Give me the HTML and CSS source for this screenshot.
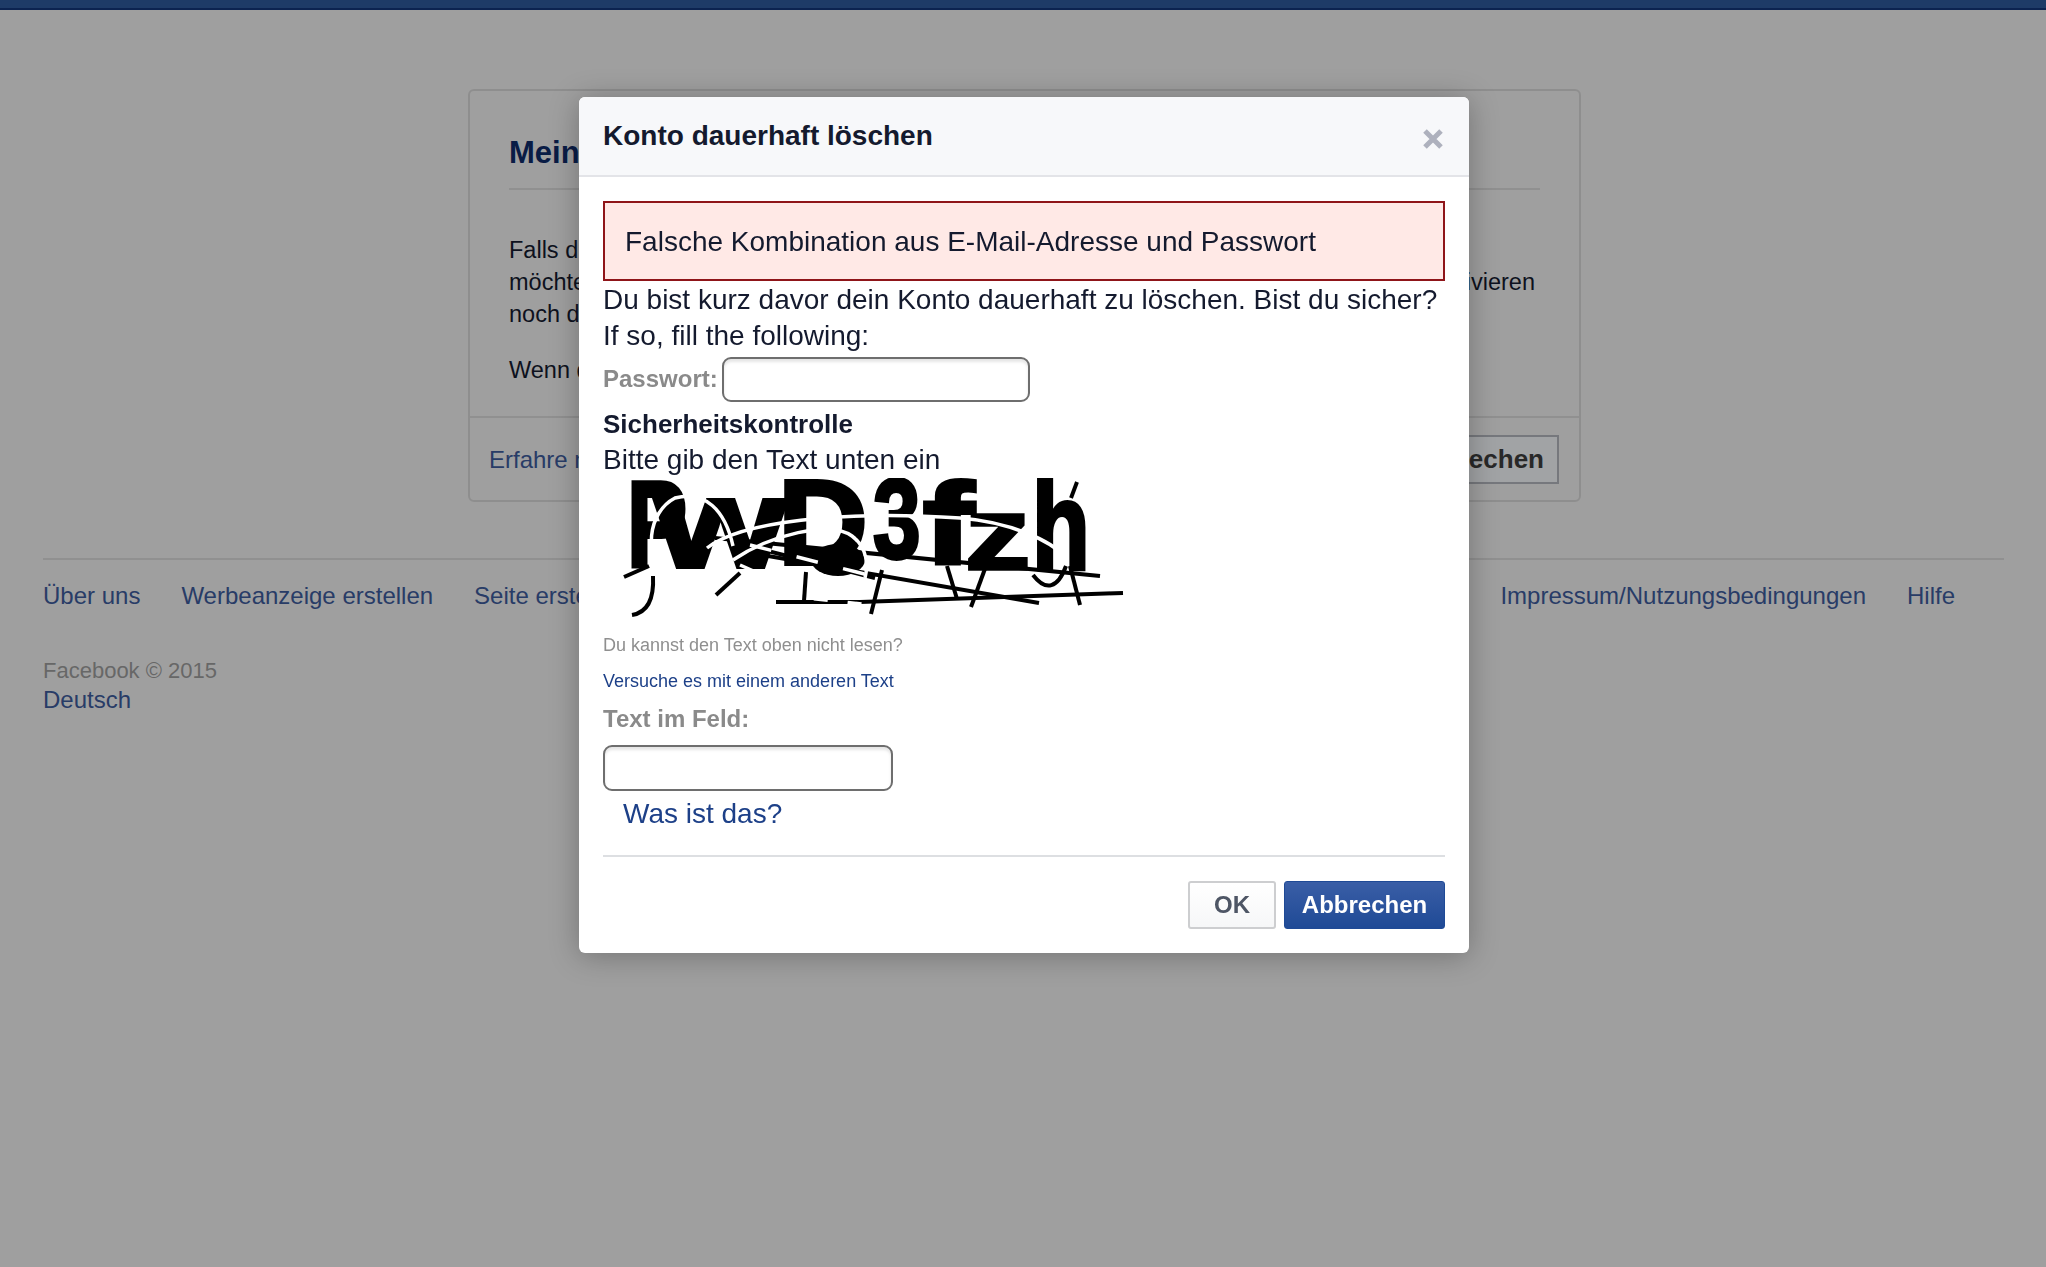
FILE: index.html
```html
<!DOCTYPE html>
<html lang="de">
<head>
<meta charset="utf-8">
<title>Konto dauerhaft löschen</title>
<link rel="stylesheet" href="styles.css">
</head>
<body>
<div class="topbar"></div>
<main class="card">
  <div class="card-main">
    <h1 class="card-title">Mein Konto löschen</h1>
    <p class="card-text">Falls du glaubst, dass du Facebook nicht mehr nutzen wirst und dein Konto löschen
      <span class="card-line">möchtest, kümmern wir uns darum. Beachte, dass du dein Konto nicht reaktivieren</span>
      noch deine Inhalte wiederherstellen kannst.</p>
    <p class="card-text card-text-last">Wenn du dein Konto trotzdem löschen möchtest, klicke auf „Konto löschen“.</p>
  </div>
  <div class="card-foot">
    <a class="link card-link" href="#">Erfahre mehr</a>
    <button class="card-btn" type="button">Mein Konto löschen – Abbrechen</button>
  </div>
</main>
<footer class="foot">
  <nav class="foot-nav">
    <div class="foot-group">
      <a class="link" href="#">Über uns</a>
      <a class="link" href="#">Werbeanzeige erstellen</a>
      <a class="link" href="#">Seite erstellen</a>
      <a class="link" href="#">Entwickler</a>
      <a class="link" href="#">Karriere</a>
      <a class="link" href="#">Datenschutz</a>
      <a class="link" href="#">Cookies</a>
    </div>
    <div class="foot-group foot-group-end">
      <a class="link" href="#">Impressum/Nutzungsbedingungen</a>
      <a class="link" href="#">Hilfe</a>
    </div>
  </nav>
  <div class="copy">Facebook © 2015</div>
  <a class="link lang" href="#">Deutsch</a>
</footer>

<div class="overlay"></div>

<section class="modal">
  <header class="modal-head">
    <h2 class="modal-title">Konto dauerhaft löschen</h2>
    <svg class="close" viewBox="0 0 20 20" aria-label="Schließen"><path d="M2 2 18 18M18 2 2 18"/></svg>
  </header>
  <div class="modal-body">
    <div class="error">Falsche Kombination aus E-Mail-Adresse und Passwort</div>
    <p class="line">Du bist kurz davor dein Konto dauerhaft zu löschen. Bist du sicher?</p>
    <p class="line">If so, fill the following:</p>
    <div class="pw-row">
      <label class="label" for="pw">Passwort:</label>
      <input class="field field-pw" id="pw" type="password">
    </div>
    <h3 class="sec-title">Sicherheitskontrolle</h3>
    <p class="line line-tight">Bitte gib den Text unten ein</p>
    <svg class="captcha" viewBox="23 18 523 150" aria-hidden="true">
      <g class="cap-letters">
        <text transform="translate(47 107) scale(1 1.37)">P</text>
        <text transform="translate(76 107) scale(1.85 1.4)">w</text>
        <text transform="translate(198 104) scale(1.38 1.33)">D</text>
        <text transform="translate(293 98) scale(.95 1.25)">3</text>
        <text transform="translate(343 104) scale(1.7 1.28)">f</text>
        <text transform="translate(385 109) scale(1.45 1.13)">z</text>
        <text transform="translate(452 109) scale(1.05 1.38)">h</text>
      </g>
      <ellipse class="cap-blob" cx="258" cy="100" rx="27" ry="16"/>
      <g class="cap-noise">
        <path d="M44 117 69 106"/>
        <path d="M73 116C74 135 70 152 52 155"/>
        <path d="M136 135 160 113"/>
        <path d="M226 112 224 141"/>
        <path d="M196 142 280 142 543 133"/>
        <path d="M302 110 291 154"/>
        <path d="M367 106 377 139"/>
        <path d="M406 106 391 147"/>
        <path d="M490 106 500 145"/>
        <path d="M453 115C466 132 478 128 486 106"/>
        <path d="M497 22 491 38"/>
        <path d="M165 92 459 143"/>
        <path d="M135 78 520 116"/>
        <path d="M160 84 295 118"/>
      </g>
      <g class="cap-white">
        <path d="M88 124C62 95 68 52 95 38 125 30 145 50 153 86"/>
        <path d="M127 88C160 62 260 50 380 58 430 62 470 80 487 98"/>
        <path d="M153 100C190 75 250 60 272 76 288 88 288 106 285 118"/>
        <path d="M160 105 205 125" stroke-dasharray="16 5"/>
        <path d="M170 85 300 118" stroke-dasharray="22 26"/>
        <path d="M200 135 290 145" stroke-dasharray="14 20"/>
      </g>
    </svg>
    <p class="hint">Du kannst den Text oben nicht lesen?</p>
    <a class="alt-link" href="#">Versuche es mit einem anderen Text</a>
    <label class="label label-block" for="cap">Text im Feld:</label>
    <input class="field field-cap" id="cap" type="text">
    <a class="what" href="#">Was ist das?</a>
    <hr class="rule">
    <div class="actions">
      <button class="btn btn-ok" type="button">OK</button>
      <button class="btn btn-cancel" type="button">Abbrechen</button>
    </div>
  </div>
</section>
</body>
</html>
```

FILE: styles.css
```css
* { box-sizing: border-box; }
html, body { height: 100%; }
body {
  margin: 0;
  background: #ebebeb;
  color: #141a2e;
  font-family: "Liberation Sans", Arial, sans-serif;
  overflow: hidden;
}
a { text-decoration: none; }
p, h1, h2, h3 { margin: 0; }

.topbar {
  height: 10px;
  background: #2d5899;
  border-bottom: 2px solid #133477;
}

.card {
  width: 1113px;
  height: 413px;
  margin: 79px 0 0 468px;
  background: #ebebeb;
  border: 2px solid #d2d2d2;
  border-radius: 6px;
  display: flex;
  flex-direction: column;
}
.card-main { flex: 1; padding: 0 39px; }
.card-title {
  height: 99px;
  padding-top: 43px;
  border-bottom: 2px solid #d4d4d4;
  font-size: 31px;
  line-height: 38px;
  color: #0e2a66;
  white-space: nowrap;
}
.card-text { margin-top: 44px; font-size: 23.5px; line-height: 32px; white-space: nowrap; }
.card-line { display: block; width: 1026px; text-align-last: justify; }
.card-text-last { margin-top: 24px; }
.card-foot {
  height: 84px;
  flex: none;
  border-top: 2px solid #d4d4d4;
  padding: 0 20px 0 19px;
  display: flex;
  align-items: center;
  justify-content: space-between;
  font-size: 24px;
}
.card-link { margin-top: 2px; }
.card-btn {
  height: 49px;
  padding: 0 13px;
  background: #eef0f3;
  border: 2px solid #aeb1b8;
  font: bold 26px "Liberation Sans", Arial, sans-serif;
  color: #3c3c3c;
  white-space: nowrap;
}

.link { color: #3b5998; }

.foot { margin: 56px 42px 0 43px; border-top: 2px solid #d4d4d4; }
.foot-nav {
  display: flex;
  justify-content: space-between;
  padding-top: 19px;
  font-size: 24px;
  line-height: 34px;
}
.foot-group { display: flex; gap: 41px; white-space: nowrap; }
.foot-group-end { margin-right: 49px; }
.copy { margin-top: 43px; font-size: 22px; line-height: 30px; color: #999; }
.lang { display: block; font-size: 24px; line-height: 28px; }

.overlay {
  position: fixed;
  inset: 0;
  background: rgba(0, 0, 0, .32);
}

.modal {
  position: absolute;
  left: 579px;
  top: 97px;
  width: 890px;
  height: 856px;
  background: #fff;
  border-radius: 6px;
  box-shadow: 0 3px 30px rgba(0, 0, 0, .28);
}
.modal-head {
  height: 80px;
  padding: 0 26px 0 24px;
  background: #f7f8fa;
  border-bottom: 2px solid #e3e4e8;
  border-radius: 6px 6px 0 0;
  display: flex;
  align-items: center;
  justify-content: space-between;
}
.modal-title { font-size: 28px; line-height: 36px; }
.close { width: 20px; height: 20px; margin-top: 6px; }
.close path { fill: none; stroke: #aeb1bd; stroke-width: 5; }

.modal-body { padding: 24px; display: flex; flex-direction: column; align-items: flex-start; }
.error {
  width: 100%;
  height: 80px;
  padding: 2px 0 0 20px;
  display: flex;
  align-items: center;
  background: #ffe9e6;
  border: 2px solid #8f1519;
  font-size: 28px;
}
.line { padding-top: 1px; font-size: 28px; line-height: 36px; white-space: nowrap; height: 36px; }
.line-tight { padding-top: 0; }
.pw-row { display: flex; align-items: center; gap: 4px; margin-top: 5px; }
.label { font-size: 24px; font-weight: bold; color: #8a8a8a; white-space: nowrap; }
.pw-row .label { margin-top: -2px; }
.field {
  display: block;
  height: 45px;
  background: #fff;
  border: 2px solid #6e6e6e;
  border-radius: 9px;
  box-shadow: inset 0 3px 3px rgba(0, 0, 0, .1);
  outline: none;
}
.field-pw { width: 308px; margin-top: -1px; }
.field-cap { width: 290px; height: 46px; margin-top: 11px; }
.sec-title { margin-top: 4px; font-size: 26px; line-height: 36px; }

.captcha { display: block; width: 523px; height: 150px; filter: blur(.6px); }
.cap-letters text {
  font: bold 90px "Liberation Sans", Arial, sans-serif;
  fill: #000;
  stroke: #000;
  stroke-width: 3px;
}
.cap-blob { fill: #000; }
.cap-noise path { fill: none; stroke: #000; stroke-width: 4; }
.cap-white path { fill: none; stroke: #fff; stroke-width: 3.5; }

.hint { margin-top: 3px; font-size: 18px; line-height: 28px; color: #8f8f8f; }
.alt-link { margin-top: 8px; font-size: 18px; line-height: 28px; color: #1d4088; }
.label-block { display: block; margin-top: 9px; line-height: 30px; }
.what { margin-top: 5px; padding-left: 20px; font-size: 28px; line-height: 36px; color: #1d4088; }
.rule { width: 100%; height: 2px; margin: 23px 0 0; border: 0; background: #dddfe2; }
.actions { align-self: stretch; display: flex; justify-content: flex-end; gap: 8px; margin-top: 24px; }
.btn {
  height: 48px;
  padding: 0;
  border-radius: 3px;
  font: bold 24px "Liberation Sans", Arial, sans-serif;
}
.btn-ok {
  width: 88px;
  color: #4e5665;
  background: linear-gradient(#fff, #f6f7f8);
  border: 2px solid #cdced0;
}
.btn-cancel {
  width: 161px;
  color: #fff;
  background: linear-gradient(#3a5ea6, #1f4a96);
  border: 1px solid #1f4a96;
}
```
